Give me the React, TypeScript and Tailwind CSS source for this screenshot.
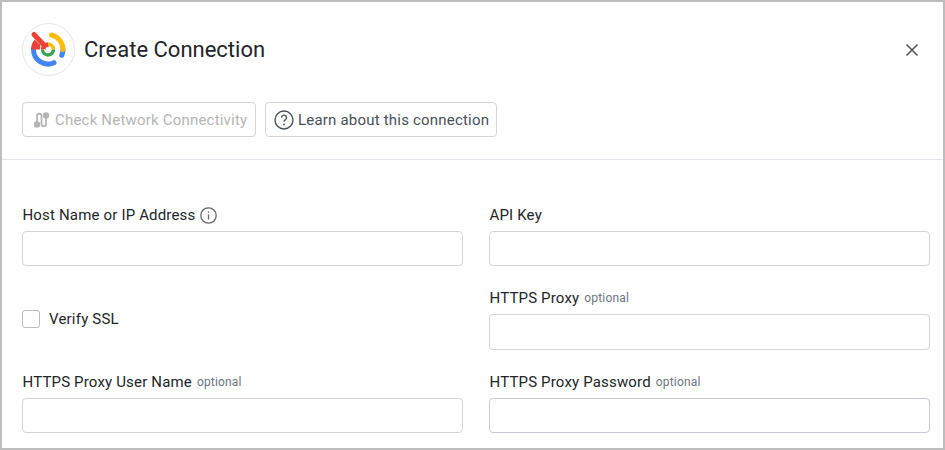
function Field({ label, optional, info, tall, accent }: { label: string; optional?: boolean; info?: boolean; tall?: boolean; accent?: boolean }) {
  return (
    <div className="flex flex-col">
      <div className="flex items-center h-[20px] mb-[6px] pl-[0.5px] text-[15px] tracking-[0.17px] text-[#212529]">
        <span>{label}</span>
        {optional && <span className="ml-[5px] text-[12px] text-[#6c757d]">optional</span>}
        {info && (
          <svg className="ml-[5px]" width="17" height="17" viewBox="0 0 17 17" fill="none" stroke="#666" strokeWidth="1.300">
            <circle cx="8.5" cy="8.5" r="7.7" />
            <path d="M8.5 7.5v5" />
            <circle cx="8.5" cy="5" r="0.8" fill="#666" stroke="none" />
          </svg>
        )}
      </div>
      <div className={`${tall ? "h-[36px]" : "h-[35px]"} rounded-[4px] border ${accent ? "border-[#c6cad6]" : "border-[#d3d5d8]"} bg-white`} />
    </div>
  );
}

function Logo() {
  return (
    <div className="w-[53px] h-[53px] rounded-full border border-[#e4e5ec] bg-white shrink-0">
      <svg width="51" height="51" viewBox="1 1 51 51" fill="none">
        <path d="M11.500 26.500a14.500 14.500 0 0 0 20.500 13.200" stroke="#4285f4" strokeWidth="5" strokeLinecap="round" />
        <path d="M41 26.500a14.500 14.500 0 0 1-1.200 5.800" stroke="#4285f4" strokeWidth="5" strokeLinecap="round" />
        <path d="M29.500 12A14.800 14.800 0 0 1 41 26.500" stroke="#fbbc05" strokeWidth="5" strokeLinecap="round" />
        <path d="M26 21a5.500 5.500 0 0 1 5.500 5.500" stroke="#fbbc05" strokeWidth="3.400" />
        <path d="M20.500 26.500a5.500 5.500 0 0 0 11 0" stroke="#34a853" strokeWidth="3.400" />
        <path d="M26 21a5.500 5.500 0 0 0-5.500 5.500" stroke="#ea4335" strokeWidth="3.400" />
        <path d="M12 11.500L24.500 24.500" stroke="#ea4335" strokeWidth="5" strokeLinecap="round" />
        <path d="M9 26.500a17 17 0 0 1 3.500-10l6 5.500-.5 4.500z" fill="#ea4335" />
        <circle cx="26" cy="26.500" r="2.500" fill="#fff" />
      </svg>
    </div>
  );
}

export default function App() {
  return (
    <div className="w-[945px] h-[450px] overflow-hidden border-2 border-[#bdbdbd] bg-white font-['Roboto',sans-serif]">
      <div className="flex items-center justify-between pl-[20px] pr-[10px] pt-[21px] h-[100px] pb-[26px]">
        <div className="flex items-center gap-[9px]">
          <Logo />
          <span className="text-[22px] text-[#212529]">Create Connection</span>
        </div>
        <svg className="mr-[13px]" width="16" height="16" viewBox="0 0 16 16" stroke="#555" strokeWidth="1.600" fill="none">
          <path d="M2.500 2.500l11 11M13.500 2.500l-11 11" />
        </svg>
      </div>
      <div className="flex gap-[9px] pl-[20px] h-[58px] border-b border-[#e4e5ec]">
        <button className="flex items-center h-[35px] w-[234px] pl-[9px] pt-[1px] gap-[3px] rounded-[4px] border border-[#d3d5d8] text-[15px] tracking-[0.2px] text-[#b5b5b5]">
          <svg className="-mt-[1px]" width="20" height="20" viewBox="0 0 20 20" fill="none" stroke="#b5b5b5" strokeWidth="1.800">
            <path d="M5 12V6a2.200 2.200 0 0 1 4.500 0v8a2.200 2.200 0 0 0 4.500 0V8" />
            <circle cx="5" cy="14.500" r="2.300" fill="#b5b5b5" />
            <circle cx="14" cy="5.500" r="2.300" fill="#b5b5b5" />
          </svg>
          Check Network Connectivity
        </button>
        <button className="flex items-center h-[35px] w-[232px] pl-[8px] pt-[1px] gap-[4px] rounded-[4px] border border-[#d3d5d8] text-[15px] tracking-[0.2px] text-[#495057]">
          <svg className="-mt-[1px]" width="20" height="20" viewBox="0 0 20 20" fill="none" stroke="#495057" strokeWidth="1.400">
            <circle cx="10" cy="10" r="9" />
            <path d="M7.500 7.700a2.500 2.500 0 1 1 3.800 2.100c-.9.500-1.300 1-1.300 2" />
            <circle cx="10" cy="14.500" r="0.900" fill="#495057" stroke="none" />
          </svg>
          Learn about this connection
        </button>
      </div>
      <div className="grid grid-cols-[441px_441px] gap-x-[26px] pl-[20px] pt-[45px]">
        <div className="flex flex-col">
          <Field label="Host Name or IP Address" info />
          <label className="flex items-center gap-[9px] mt-[44px] h-[18px] text-[15px] tracking-[0.2px] text-[#212529]">
            <span className="w-[18px] h-[18px] rounded-[3px] border border-[#b9bcc0] bg-white" />
            Verify SSL
          </label>
          <div className="mt-[44px]">
            <Field label="HTTPS Proxy User Name" optional />
          </div>
        </div>
        <div className="flex flex-col">
          <Field label="API Key" />
          <div className="mt-[22px]">
            <Field label="HTTPS Proxy" optional tall />
          </div>
          <div className="mt-[22px]">
            <Field label="HTTPS Proxy Password" optional accent />
          </div>
        </div>
      </div>
    </div>
  );
}
